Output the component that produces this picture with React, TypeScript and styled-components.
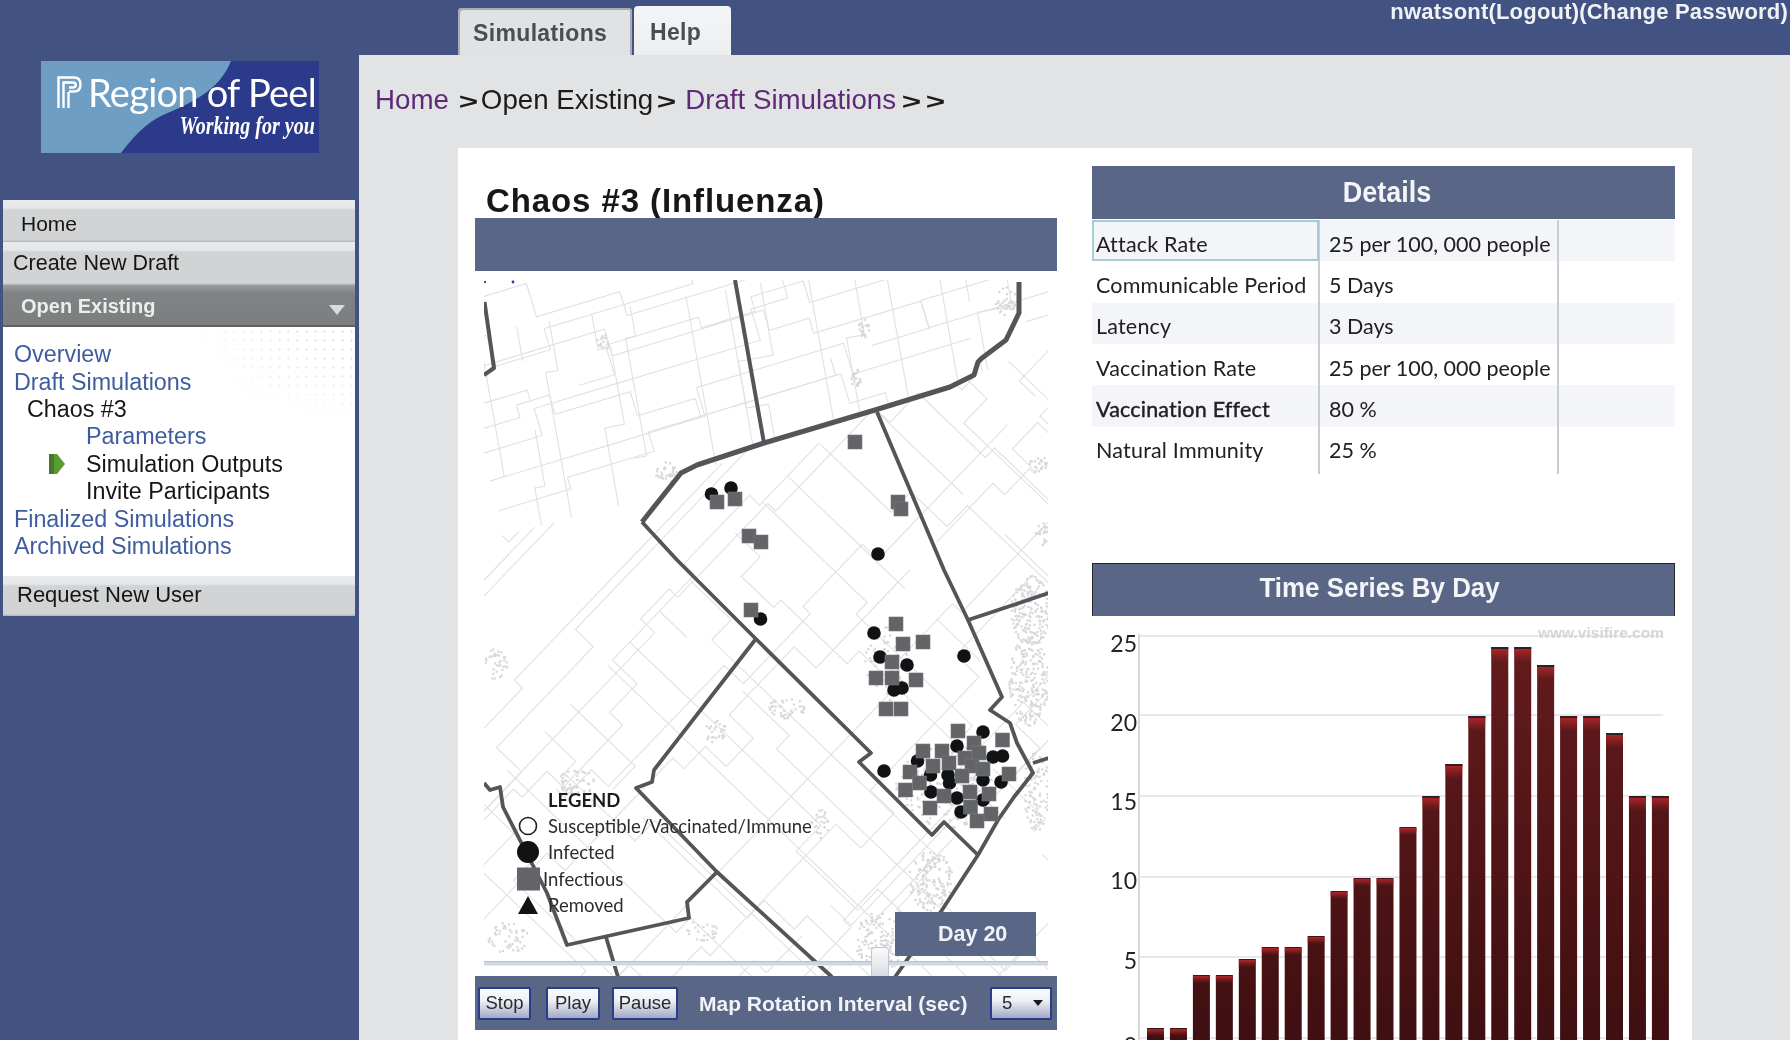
import React from "react";
import styled, { createGlobalStyle } from "styled-components";

const Global = createGlobalStyle`
  html, body { margin: 0; padding: 0; background: #415283; }
  * { box-sizing: border-box; }
`;

const SANS = `"Liberation Sans", Arial, sans-serif`;
const HUMAN = `Lato, "Open Sans", sans-serif`;

const Page = styled.div`
  width: 1790px;
  height: 1040px;
  overflow: hidden;
  display: grid;
  grid-template-columns: 359px 1fr;
  background: #415283;
  font-family: ${SANS};
  filter: blur(0.45px);
`;

const Side = styled.aside`
  padding: 61px 0 0 3px;
`;
const LogoBox = styled.div`
  width: 278px;
  height: 92px;
  margin-left: 38px;
  position: relative;
  overflow: hidden;
`;
const LogoArt = styled.svg`
  display: block;
  width: 278px;
  height: 92px;
`;
const LogoName = styled.div`
  position: absolute;
  left: 47px;
  top: 8px;
  width: 228px;
  font-family: Lato, sans-serif;
  font-size: 38px;
  line-height: 46px;
  letter-spacing: -0.75px;
  color: #fff;
  white-space: nowrap;
`;
const LogoTag = styled.div`
  position: absolute;
  right: 4px;
  top: 50px;
  font-family: "Liberation Serif", serif;
  font-style: italic;
  font-weight: 700;
  font-size: 26px;
  line-height: 30px;
  color: #fff;
  white-space: nowrap;
  transform: scaleX(0.77);
  transform-origin: right center;
`;
const Nav = styled.nav`
  width: 352px;
  margin-top: 47px;
  display: flex;
  flex-direction: column;
`;
const NavBar = styled.div<{ $h: number; $pad: number; $size: number; $top: number; $bottom?: number }>`
  height: ${(p) => p.$h}px;
  padding-left: ${(p) => p.$pad}px;
  padding-top: ${(p) => p.$top}px;
  padding-bottom: ${(p) => p.$bottom ?? 0}px;
  font-size: ${(p) => p.$size}px;
  color: #151515;
  display: flex;
  align-items: center;
  background: linear-gradient(#e9eaeb 0, #e6e7e8 8px, #d1d3d4 10px, #d1d3d4 calc(100% - 2px), #aeb0b2 100%);
`;
const NavActive = styled.div`
  height: 42px;
  padding: 2px 0 0 18px;
  display: flex;
  align-items: center;
  justify-content: space-between;
  font-size: 20px;
  font-weight: 700;
  color: #eceded;
  background: linear-gradient(#9b9d9f 0, #808284 8px, #7c7e80 100%);
  border-bottom: 2px solid #5f6163;
`;
const Caret = styled.span`
  width: 0;
  height: 0;
  margin: 7px 10px 0 0;
  border-left: 8px solid transparent;
  border-right: 8px solid transparent;
  border-top: 10px solid #d9dadb;
`;
const Menu = styled.ul`
  list-style: none;
  margin: 0;
  padding: 14px 0 15px;
  height: 249px;
  background: #fff;
  position: relative;
  &::before {
    content: "";
    position: absolute;
    top: 0;
    right: 0;
    width: 170px;
    height: 100px;
    background-image: radial-gradient(circle, #e3e6ec 1.2px, transparent 1.4px);
    background-size: 9px 9px;
    -webkit-mask-image: radial-gradient(ellipse at top right, #000 20%, transparent 72%);
    mask-image: radial-gradient(ellipse at top right, #000 20%, transparent 72%);
  }
`;
const MenuItem = styled.li<{ $indent: number; $link?: boolean }>`
  position: relative;
  height: 27.4px;
  padding-left: ${(p) => p.$indent}px;
  display: flex;
  align-items: center;
  font-size: 23.3px;
  color: ${(p) => (p.$link ? "#3f5d9e" : "#161616")};
`;
const ArrowIcon = styled.svg`
  width: 16px;
  height: 20px;
  margin-right: 21px;
`;

const Main = styled.main`
  display: flex;
  flex-direction: column;
  min-width: 0;
`;
const TopBar = styled.header`
  height: 55px;
  flex: none;
  display: flex;
  align-items: flex-end;
  padding-left: 99px;
`;
const Tab = styled.div<{ $active?: boolean }>`
  height: ${(p) => (p.$active ? 47 : 49)}px;
  width: ${(p) => (p.$active ? 174 : 97)}px;
  margin-right: 2px;
  padding-left: ${(p) => (p.$active ? 15 : 16)}px;
  display: flex;
  align-items: center;
  padding-top: 4px;
  font-size: 23px;
  font-weight: 700;
  letter-spacing: 0.35px;
  color: #4b4d51;
  border-radius: 4px 4px 0 0;
  background: ${(p) => (p.$active ? "#e0e2e4" : "linear-gradient(#f4f5f6, #eceef0)")};
  box-shadow: ${(p) => (p.$active ? "inset 2px 2px 0 #a9adb3, inset -2px 0 0 #a9adb3" : "none")};
`;
const UserLinks = styled.div`
  margin-left: auto;
  align-self: flex-start;
  padding: 1px 2px 0 0;
  font-size: 22px;
  line-height: 21px;
  font-weight: 700;
  letter-spacing: 0.2px;
  color: #f1f2f5;
  white-space: nowrap;
`;
const Content = styled.div`
  flex: 1;
  background: #e1e3e5;
  min-height: 0;
`;
const Crumbs = styled.div`
  height: 93px;
  padding: 0 0 3px 16px;
  display: flex;
  align-items: center;
  font-size: 27.7px;
  color: #1b1b1b;
`;
const CrumbLink = styled.span`
  color: #5e2a78;
`;
const Chevron = styled.span<{ $l: number; $r: number }>`
  display: inline-block;
  width: 19px;
  text-align: center;
  font-weight: 700;
  margin: 4px ${(p) => p.$r}px 0 ${(p) => p.$l}px;
  transform: scale(1.2, 0.78);
  color: #1b1b1b;
`;
const Card = styled.section`
  margin-left: 99px;
  width: 1234px;
  height: 892px;
  background: #fff;
  display: grid;
  grid-template-columns: 582px 583px;
  column-gap: 35px;
  padding-left: 17px;
`;
const LeftCol = styled.div`
  display: flex;
  flex-direction: column;
`;
const Title = styled.h1`
  height: 70px;
  margin: 0;
  padding: 0 0 1px 11px;
  display: flex;
  align-items: flex-end;
  font-size: 33px;
  line-height: 33px;
  letter-spacing: 0.9px;
  font-weight: 700;
  color: #171717;
`;
const Strip = styled.div`
  height: 53px;
  flex: none;
  background: #5a6686;
`;
const MapWrap = styled.div`
  width: 564px;
  height: 696px;
  margin: 9px 0 0 9px;
  position: relative;
  flex: none;
`;
const MapSvg = styled.svg`
  display: block;
  width: 564px;
  height: 696px;
`;
const Legend = styled.div`
  position: absolute;
  left: 33px;
  top: 508px;
  font-family: ${HUMAN};
  font-size: 18.5px;
  color: #2c2c2c;
`;
const LegendHead = styled.div`
  padding-left: 31px;
  height: 25px;
  line-height: 24px;
  font-weight: 700;
  color: #1c1c1c;
`;
const LegendRow = styled.div<{ $textLeft?: number }>`
  height: 26.3px;
  display: flex;
  align-items: center;
  white-space: nowrap;
  & > svg {
    flex: none;
    width: 24px;
    height: 24px;
    margin-right: ${(p) => p.$textLeft ?? 7}px;
  }
`;
const DayBox = styled.div`
  position: absolute;
  left: 411px;
  top: 632px;
  width: 141px;
  height: 44px;
  padding: 1px 0 0 43px;
  display: flex;
  align-items: center;
  font-size: 21.5px;
  font-weight: 700;
  color: #f2f3f6;
  background: #5a6686;
`;
const Track = styled.div`
  position: absolute;
  left: 0;
  right: 0;
  top: 681px;
  height: 5px;
  background: #cfd7e4;
  border-top: 1px solid #b6bfce;
  border-bottom: 1px solid #e6ebf2;
`;
const Thumb = styled.div`
  position: absolute;
  left: 387px;
  top: 667px;
  width: 18px;
  height: 29px;
  border: 1px solid #c3c8d0;
  border-bottom: 0;
  border-radius: 4px 4px 0 0;
  background: linear-gradient(#fbfbfc, #d9dde3);
`;
const Controls = styled.div`
  height: 54px;
  flex: none;
  background: #5a6686;
  display: flex;
  align-items: center;
  padding-left: 3px;
  color: #f2f3f6;
`;
const CtlButton = styled.div<{ $w: number; $r: number }>`
  width: ${(p) => p.$w}px;
  height: 33px;
  margin-right: ${(p) => p.$r}px;
  border: 2px solid #2b3c8c;
  border-radius: 2px;
  display: flex;
  align-items: center;
  justify-content: center;
  font-size: 18.5px;
  color: #2a2a2a;
  background: linear-gradient(#fbfbfd 0, #eef0f6 40%, #a2a9c4 100%);
`;
const CtlLabel = styled.div`
  width: 291px;
  padding-top: 2px;
  font-size: 21px;
  font-weight: 700;
  white-space: nowrap;
`;
const Select = styled.div`
  width: 62px;
  height: 33px;
  border: 2px solid #2b3c8c;
  border-radius: 2px;
  padding: 0 7px 0 10px;
  display: flex;
  align-items: center;
  justify-content: space-between;
  font-size: 18.5px;
  color: #2a2a2a;
  background: linear-gradient(#fbfbfd 0, #eef0f6 40%, #a2a9c4 100%);
`;
const SelectCaret = styled.span`
  width: 0;
  height: 0;
  border-left: 5px solid transparent;
  border-right: 5px solid transparent;
  border-top: 6px solid #1a1a1a;
`;

const RightCol = styled.div`
  padding-top: 18px;
  display: flex;
  flex-direction: column;
`;
const PanelHead = styled.div<{ $framed?: boolean; $shift: number }>`
  height: 53px;
  flex: none;
  background: #5a6686;
  color: #f4f5f8;
  font-weight: 700;
  display: flex;
  align-items: center;
  justify-content: center;
  padding-left: ${(p) => (p.$shift > 0 ? p.$shift : 0)}px;
  padding-right: ${(p) => (p.$shift < 0 ? -p.$shift : 0)}px;
  padding-bottom: ${(p) => (p.$framed ? 4 : 2)}px;
  border: 1px solid ${(p) => (p.$framed ? "#23272f" : "#5a6686")};
  border-bottom-color: #5a6686;
`;
const HeadText = styled.span<{ $size: number }>`
  display: inline-block;
  font-size: ${(p) => p.$size}px;
  transform: scaleX(0.92);
`;
const Table = styled.table`
  width: 583px;
  height: 254px;
  margin-top: 1px;
  border-collapse: collapse;
  table-layout: fixed;
  font-family: ${HUMAN};
  font-size: 21.5px;
  color: #202020;
`;
const Col = styled.col<{ $w: number }>`
  width: ${(p) => p.$w}px;
`;
const Row = styled.tr<{ $shade?: boolean; $h?: number }>`
  height: ${(p) => p.$h ?? 41.1}px;
  background: ${(p) => (p.$shade ? "#f3f5f9" : "#fff")};
`;
const Cell = styled.td<{ $focus?: boolean; $strong?: boolean; $divider?: boolean; $pad: number; $track?: number }>`
  padding: ${(p) => (p.$focus !== undefined ? 6 : 0)}px 0 0 ${(p) => p.$pad}px;
  white-space: nowrap;
  letter-spacing: ${(p) => p.$track ?? 0}px;
  border-right: ${(p) => (p.$divider ? "2px solid #c9cdd2" : "0")};
  -webkit-text-stroke: ${(p) => (p.$strong ? "0.4px #202020" : "0")};
  outline: ${(p) => (p.$focus ? "2px solid #a8cbd6" : "0")};
  outline-offset: -2px;
`;
const ChartHeadWrap = styled.div`
  margin-top: 89px;
`;
const ChartSvg = styled.svg`
  display: block;
  width: 583px;
  height: 424px;
`;

/* ---------- logo ---------- */
const Logo = () => (
  <LogoBox>
    <LogoArt viewBox="0 0 278 92" role="img">
      <rect width="278" height="92" fill="#2c3a8b" />
      <path d="M0 0H190C178 30 150 42 122 54C105 62 92 76 80 92H0Z" fill="#6f9ec4" />
      <g fill="none" stroke="#fff" strokeWidth="2.4">
        <path d="M17.5 47V16.5H33Q39.5 16.5 39.5 23.5Q39.5 30.5 33 30.5H28" />
        <path d="M22.5 47V21.5H32Q34.8 21.5 34.8 24Q34.8 26.5 32 26.5H28" />
        <path d="M27.5 47V31" />
      </g>
    </LogoArt>
    <LogoName>Region of Peel</LogoName>
    <LogoTag>Working for you</LogoTag>
  </LogoBox>
);

/* ---------- map data ---------- */
const rng = (seed: number) => {
  let s = seed;
  return () => (s = (s * 16807) % 2147483647) / 2147483647;
};

const roadFamily = (
  seed: number,
  dir: [number, number],
  origin: [number, number],
  spacing: number,
  count: number,
  len: number,
) => {
  const r = rng(seed);
  const out: string[] = [];
  const perp: [number, number] = [-dir[1], dir[0]];
  for (let i = 0; i < count; i++) {
    const off = i * spacing + r() * spacing * 0.5;
    let x = origin[0] + perp[0] * off;
    let y = origin[1] + perp[1] * off;
    let d = `M${x.toFixed(1)} ${y.toFixed(1)}`;
    let run = 0;
    while (run < len) {
      const step = 30 + r() * 70;
      x += dir[0] * step;
      y += dir[1] * step;
      d += `L${x.toFixed(1)} ${y.toFixed(1)}`;
      run += step;
      if (r() < 0.45) {
        const jog = (r() < 0.5 ? -1 : 1) * (10 + r() * 26);
        x += perp[0] * jog;
        y += perp[1] * jog;
        d += `L${x.toFixed(1)} ${y.toFixed(1)}`;
      }
      if (r() < 0.1) {
        const gap = 30 + r() * 50;
        x += dir[0] * gap;
        y += dir[1] * gap;
        d += `M${x.toFixed(1)} ${y.toFixed(1)}`;
        run += gap;
      }
    }
    out.push(d);
  }
  return out;
};

const topRoads = [
  ...roadFamily(11, [0.175, 0.985], [1060, 230], 42, 16, 420),
  ...roadFamily(29, [0.96, -0.29], [420, 250], 30, 16, 800),
];
const lowRoads = [
  ...roadFamily(53, [0.72, 0.69], [1150, 100], 46, 28, 1300),
  ...roadFamily(97, [-0.69, 0.72], [1400, 560], 46, 24, 1200),
];

const urbanZones: [number, number, number, number, number][] = [
  [1030, 610, 20, 35, 190],
  [1028, 680, 20, 45, 220],
  [1036, 790, 14, 40, 110],
  [930, 880, 22, 30, 150],
  [880, 940, 26, 30, 150],
  [886, 662, 22, 38, 90],
  [945, 785, 50, 42, 180],
  [575, 782, 18, 14, 50],
  [507, 937, 20, 16, 50],
  [495, 663, 12, 16, 36],
  [786, 707, 18, 12, 44],
  [715, 730, 12, 12, 28],
  [820, 823, 10, 14, 28],
  [665, 473, 11, 12, 34],
  [1005, 300, 11, 14, 34],
  [863, 327, 6, 10, 20],
  [855, 377, 5, 10, 20],
  [1037, 463, 10, 9, 26],
  [1041, 533, 8, 12, 26],
  [604, 340, 8, 8, 16],
  [700, 930, 18, 10, 26],
];
const urbanDots = (() => {
  const r = rng(4242);
  const pts: [number, number][] = [];
  urbanZones.forEach(([cx, cy, rx, ry, n]) => {
    for (let i = 0; i < n; i++) {
      const a = r() * Math.PI * 2;
      const m = Math.sqrt(r());
      pts.push([cx + Math.cos(a) * rx * m, cy + Math.sin(a) * ry * m]);
    }
  });
  return pts;
})();

const thickLines: [string, number][] = [
  ["735,280 764,443", 4],
  ["642,522 681,473 697,465 764,443 875,410 950,387 974,375 978,362 982,358 1006,340 1019,313 1019,282", 5],
  ["877,412 944,570 968,620 1002,697 990,710 1010,723 1017,743 1033,773 1014,797 998,820 978,855 942,910 895,977", 3.8],
  ["968,620 1049,593", 3.8],
  ["1033,763 1049,758", 3.8],
  ["642,522 677,560 755,638 871,753 859,762 932,835 944,822 978,855", 3.8],
  ["755,640 654,770 652,782 636,788 717,872 832,977", 3.8],
  ["717,872 687,902 689,918 567,945 547,893 503,807 500,787 490,790 484,783", 3.8],
  ["606,937 618,977", 3.8],
  ["484.5,302 494,368 484,375", 4],
];

const squares: [number, number][] = [
  [855, 442], [717, 502], [735, 499], [749, 536], [761, 542], [898, 502], [901, 509], [751, 610],
  [896, 624], [903, 644], [923, 642], [892, 662], [876, 678], [892, 678], [916, 680], [886, 709], [901, 709],
  [958, 731], [1002.5, 740], [974, 743], [923, 751], [942, 751], [965, 758], [979, 753], [933, 766], [949, 763],
  [972, 766], [983, 769], [910, 772], [1009, 774], [962, 776], [919.5, 783], [905.5, 790], [970, 792], [989, 794],
  [944, 796], [970.5, 807], [930, 808], [991, 814], [977, 821],
];
const circles: [number, number][] = [
  [711.5, 494], [731, 488], [878, 554], [760.5, 619], [874, 633], [880, 657], [907, 665], [894, 690], [902, 688],
  [964, 656], [983, 732], [957, 746], [917.5, 761], [993, 757], [1002.5, 756], [884, 771], [930.5, 775], [948, 775],
  [983, 780], [949.5, 783], [1001, 782], [931, 792], [957, 798], [983, 800], [961, 812],
];

const MapDrawing = () => (
  <MapSvg viewBox="484 280 564 696" role="img">
    <defs>
      <clipPath id="topZone">
        <polygon points="484,280 1048,280 1048,345 974,375 764,443 642,500 484,540" />
      </clipPath>
      <clipPath id="lowZone">
        <polygon points="484,540 642,500 764,443 974,375 1048,345 1048,976 484,976" />
      </clipPath>
    </defs>
    <rect x="484" y="280" width="564" height="696" fill="#fff" />
    <g fill="none" stroke="#dfe1e3" strokeWidth="1.1">
      <g clipPath="url(#topZone)">
        {topRoads.map((d, i) => (
          <path key={i} d={d} />
        ))}
      </g>
      <g clipPath="url(#lowZone)">
        {lowRoads.map((d, i) => (
          <path key={i} d={d} />
        ))}
      </g>
    </g>
    <g fill="#d6d8db">
      {urbanDots.map(([x, y], i) => (
        <rect key={i} x={x} y={y} width="2.2" height="2.2" />
      ))}
    </g>
    <g fill="none" stroke="#535558" strokeLinejoin="round">
      {thickLines.map(([p, w], i) => (
        <polyline key={i} points={p} strokeWidth={w} />
      ))}
    </g>
    <circle cx="485" cy="282" r="1.2" fill="#556" />
    <circle cx="513" cy="282" r="1.4" fill="#33a" />
    <g fill="#111214">
      {circles.map(([x, y], i) => (
        <circle key={i} cx={x} cy={y} r="6.8" />
      ))}
    </g>
    <g fill="#636467" stroke="#77787b" strokeWidth="0.6">
      {squares.map(([x, y], i) => (
        <rect key={i} x={x - 7} y={y - 7} width="14" height="14" />
      ))}
    </g>
  </MapSvg>
);

/* ---------- chart data ---------- */
const barTops = [1028, 1028, 975, 975, 959, 947, 947, 936, 891, 878, 878, 827, 796, 764, 716, 647, 647, 665, 716, 716, 733, 796, 796];
const grid: [number, string, number][] = [
  [636, "25", 644],
  [715, "20", 723],
  [796, "15", 802],
  [877, "10", 881],
  [957, "5", 961],
  [1038, "0", 1046],
];

const Chart = () => (
  <ChartSvg viewBox="1092 616 583 424" role="img">
    <defs>
      <linearGradient id="barBody" gradientUnits="userSpaceOnUse" x1="0" y1="640" x2="0" y2="1040">
        <stop offset="0" stopColor="#641b1d" />
        <stop offset="1" stopColor="#3f0f11" />
      </linearGradient>
      <linearGradient id="barCap" x1="0" y1="0" x2="0" y2="1">
        <stop offset="0" stopColor="#b0262a" />
        <stop offset="1" stopColor="#a02428" stopOpacity="0" />
      </linearGradient>
    </defs>
    <line x1="1139" y1="634" x2="1139" y2="1040" stroke="#b9bcc2" strokeWidth="1.2" />
    {grid.map(([y, label, ty]) => (
      <g key={label}>
        <line x1="1139" y1={y} x2="1663" y2={y} stroke="#dfe1e5" strokeWidth="1.6" />
        <text x="1137" y={ty + 8} textAnchor="end" fontFamily="Lato, sans-serif" fontSize="23" fill="#222">
          {label}
        </text>
      </g>
    ))}
    <text x="1664" y="638" textAnchor="end" fontFamily={'"Liberation Sans", sans-serif'} fontWeight="700" fontSize="15.5" fill="#d4d6da">
      www.visifire.com
    </text>
    {barTops.map((top, i) => {
      const x = 1147 + i * 22.95;
      const tall = top < 800;
      return (
        <g key={i}>
          <rect x={x} y={top} width="17" height={1040 - top} fill="url(#barBody)" />
          <rect x={x} y={top + 1} width="17" height={tall ? 14 : 7} fill="url(#barCap)" />
          {tall && <rect x={x} y={top} width="17" height="2" fill="#2b2224" />}
        </g>
      );
    })}
  </ChartSvg>
);

const rows: [string, string, boolean?][] = [
  ["Attack Rate", "25 per 100, 000 people"],
  ["Communicable Period", "5 Days"],
  ["Latency", "3 Days"],
  ["Vaccination Rate", "25 per 100, 000 people"],
  ["Vaccination Effect", "80 %", true],
  ["Natural Immunity", "25 %"],
];

export default function App() {
  return (
    <>
      <Global />
      <Page>
        <Side>
          <Logo />
          <Nav>
            <NavBar $h={42} $pad={18} $size={21} $top={6}>Home</NavBar>
            <NavBar $h={43} $pad={10} $size={21.5} $top={0}>Create New Draft</NavBar>
            <NavActive>
              Open Existing
              <Caret />
            </NavActive>
            <Menu>
              <MenuItem $indent={11} $link>Overview</MenuItem>
              <MenuItem $indent={11} $link>Draft Simulations</MenuItem>
              <MenuItem $indent={24}>Chaos #3</MenuItem>
              <MenuItem $indent={83} $link>Parameters</MenuItem>
              <MenuItem $indent={46}>
                <ArrowIcon viewBox="0 0 16 20">
                  <path d="M0 0H8L16 10L8 20H0Z" fill="#5b9c32" />
                  <path d="M0 0H5V20H0Z" fill="#47782f" />
                </ArrowIcon>
                Simulation Outputs
              </MenuItem>
              <MenuItem $indent={83}>Invite Participants</MenuItem>
              <MenuItem $indent={11} $link>Finalized Simulations</MenuItem>
              <MenuItem $indent={11} $link>Archived Simulations</MenuItem>
            </Menu>
            <NavBar $h={40} $pad={14} $size={22} $top={0} $bottom={2}>Request New User</NavBar>
          </Nav>
        </Side>
        <Main>
          <TopBar>
            <Tab $active>Simulations</Tab>
            <Tab>Help</Tab>
            <UserLinks>nwatsont(Logout)(Change Password)</UserLinks>
          </TopBar>
          <Content>
            <Crumbs>
              <CrumbLink>Home</CrumbLink>
              <Chevron $l={10} $r={3}>&gt;</Chevron>
              Open Existing
              <Chevron $l={4} $r={9}>&gt;</Chevron>
              <CrumbLink>Draft Simulations</CrumbLink>
              <Chevron $l={6} $r={5}>&gt;</Chevron>
              <Chevron $l={0} $r={0}>&gt;</Chevron>
            </Crumbs>
            <Card>
              <LeftCol>
                <Title>Chaos #3 (Influenza)</Title>
                <Strip />
                <MapWrap>
                  <MapDrawing />
                  <Legend>
                    <LegendHead>LEGEND</LegendHead>
                    <LegendRow>
                      <svg viewBox="0 0 24 24"><circle cx="11" cy="12" r="8.5" fill="#fff" stroke="#222" strokeWidth="1.6" /></svg>
                      Susceptible/Vaccinated/Immune
                    </LegendRow>
                    <LegendRow>
                      <svg viewBox="0 0 24 24"><circle cx="11" cy="12" r="11" fill="#111214" /></svg>
                      Infected
                    </LegendRow>
                    <LegendRow $textLeft={2}>
                      <svg viewBox="0 0 24 24"><rect x="0" y="0.5" width="23" height="23" fill="#636467" /></svg>
                      Infectious
                    </LegendRow>
                    <LegendRow>
                      <svg viewBox="0 0 24 24"><path d="M11 3L21 21H1Z" fill="#111214" /></svg>
                      Removed
                    </LegendRow>
                  </Legend>
                  <Track />
                  <Thumb />
                  <DayBox>Day 20</DayBox>
                </MapWrap>
                <Controls>
                  <CtlButton $w={53} $r={15}>Stop</CtlButton>
                  <CtlButton $w={54} $r={12}>Play</CtlButton>
                  <CtlButton $w={66} $r={21}>Pause</CtlButton>
                  <CtlLabel>Map Rotation Interval (sec)</CtlLabel>
                  <Select>
                    5
                    <SelectCaret />
                  </Select>
                </Controls>
              </LeftCol>
              <RightCol>
                <PanelHead $shift={8}><HeadText $size={29.3}>Details</HeadText></PanelHead>
                <Table>
                  <colgroup>
                    <Col $w={227} />
                    <Col $w={239} />
                    <Col $w={117} />
                  </colgroup>
                  <tbody>
                    {rows.map(([name, value, strong], i) => (
                      <Row key={name} $shade={i % 2 === 0}>
                        <Cell $pad={4} $divider $focus={i === 0} $strong={strong} $track={0.2}>{name}</Cell>
                        <Cell $pad={9} $divider $focus={false}>{value}</Cell>
                        <Cell $pad={0} />
                      </Row>
                    ))}
                    <Row $h={6}>
                      <Cell $pad={0} $divider />
                      <Cell $pad={0} $divider />
                      <Cell $pad={0} />
                    </Row>
                  </tbody>
                </Table>
                <ChartHeadWrap>
                  <PanelHead $framed $shift={-8}><HeadText $size={28.2}>Time Series By Day</HeadText></PanelHead>
                </ChartHeadWrap>
                <Chart />
              </RightCol>
            </Card>
          </Content>
        </Main>
      </Page>
    </>
  );
}
